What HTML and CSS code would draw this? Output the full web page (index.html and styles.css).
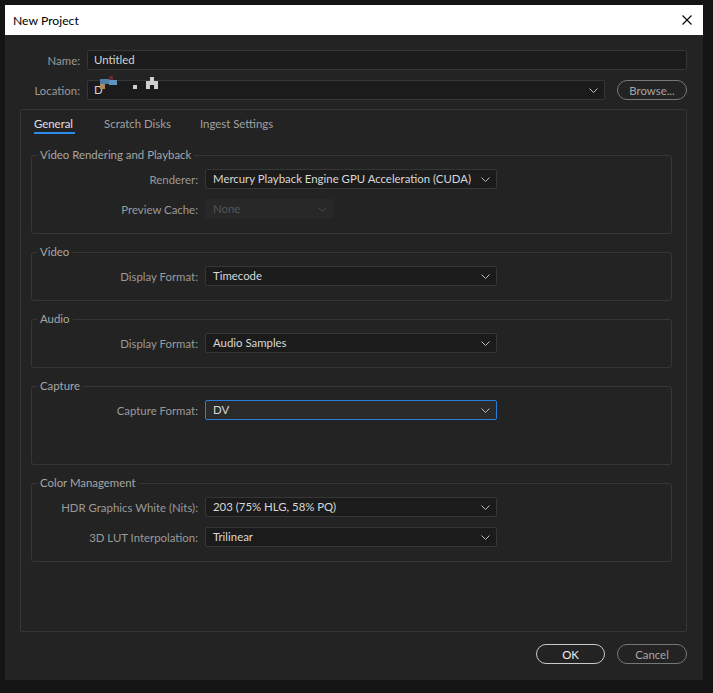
FILE: index.html
```html
<!DOCTYPE html>
<html lang="en">
<head>
    <meta charset="UTF-8">
    <title>New Project</title>
    <link rel="stylesheet" href="styles.css">
</head>
<body>
    <div class="window">
        <div class="titlebar">
            <span class="title">New Project</span>
            <svg class="close" width="10" height="10" viewBox="0 0 10 10">
                <path d="M0.5 0.5 L9.5 9.5 M9.5 0.5 L0.5 9.5" stroke="#000" stroke-width="1.1" fill="none"/>
            </svg>
        </div>

        <div class="content">
            <!-- project name and location -->
            <div class="top-form">
                <label class="top-label">Name:</label>
                <div class="text-field wide">Untitled</div>

                <label class="top-label">Location:</label>
                <div class="text-field location">
                    D
                    <span class="blur">
                        <i class="px p1"></i><i class="px p2"></i><i class="px p3"></i><i class="px p4"></i>
                        <i class="px dot"></i><i class="px house"></i>
                    </span>
                    <svg class="chev" width="9" height="5" viewBox="0 0 9 5"><path d="M0.5 0.5 L4.5 4.5 L8.5 0.5" stroke="#bbb" fill="none"/></svg>
                </div>
                <button class="pill browse">Browse...</button>
            </div>

            <div class="panel">
                <div class="tabs">
                    <span class="tab active">General</span>
                    <span class="tab">Scratch Disks</span>
                    <span class="tab">Ingest Settings</span>
                </div>

                <fieldset class="group first">
                    <legend>Video Rendering and Playback</legend>
                    <div class="row">
                        <span class="label">Renderer:</span>
                        <div class="select">Mercury Playback Engine GPU Acceleration (CUDA)
                            <svg class="chev" width="9" height="5" viewBox="0 0 9 5"><path d="M0.5 0.5 L4.5 4.5 L8.5 0.5" stroke="#bbb" fill="none"/></svg>
                        </div>
                    </div>
                    <div class="row">
                        <span class="label">Preview Cache:</span>
                        <div class="select small disabled">None
                            <svg class="chev" width="9" height="5" viewBox="0 0 9 5"><path d="M0.5 0.5 L4.5 4.5 L8.5 0.5" stroke="#4a4a4a" fill="none"/></svg>
                        </div>
                    </div>
                </fieldset>

                <fieldset class="group">
                    <legend>Video</legend>
                    <div class="row">
                        <span class="label">Display Format:</span>
                        <div class="select">Timecode
                            <svg class="chev" width="9" height="5" viewBox="0 0 9 5"><path d="M0.5 0.5 L4.5 4.5 L8.5 0.5" stroke="#bbb" fill="none"/></svg>
                        </div>
                    </div>
                </fieldset>

                <fieldset class="group">
                    <legend>Audio</legend>
                    <div class="row">
                        <span class="label">Display Format:</span>
                        <div class="select">Audio Samples
                            <svg class="chev" width="9" height="5" viewBox="0 0 9 5"><path d="M0.5 0.5 L4.5 4.5 L8.5 0.5" stroke="#bbb" fill="none"/></svg>
                        </div>
                    </div>
                </fieldset>

                <fieldset class="group tall">
                    <legend>Capture</legend>
                    <div class="row">
                        <span class="label">Capture Format:</span>
                        <div class="select focused">DV
                            <svg class="chev" width="9" height="5" viewBox="0 0 9 5"><path d="M0.5 0.5 L4.5 4.5 L8.5 0.5" stroke="#bbb" fill="none"/></svg>
                        </div>
                    </div>
                </fieldset>

                <fieldset class="group">
                    <legend>Color Management</legend>
                    <div class="row">
                        <span class="label">HDR Graphics White (Nits):</span>
                        <div class="select">203 (75% HLG, 58% PQ)
                            <svg class="chev" width="9" height="5" viewBox="0 0 9 5"><path d="M0.5 0.5 L4.5 4.5 L8.5 0.5" stroke="#bbb" fill="none"/></svg>
                        </div>
                    </div>
                    <div class="row">
                        <span class="label">3D LUT Interpolation:</span>
                        <div class="select">Trilinear
                            <svg class="chev" width="9" height="5" viewBox="0 0 9 5"><path d="M0.5 0.5 L4.5 4.5 L8.5 0.5" stroke="#bbb" fill="none"/></svg>
                        </div>
                    </div>
                </fieldset>
            </div>

            <div class="buttons">
                <button class="pill ok">OK</button>
                <button class="pill">Cancel</button>
            </div>
        </div>
    </div>
</body>
</html>
```

FILE: styles.css
```css
body {
    margin: 0;
    padding: 5px;
    background-color: #141414;
    font-family: Lato, "Noto Sans", sans-serif;
    font-size: 11.4px;
}
.window {
    width: 698px;
    height: 675px;
    display: flex;
    flex-direction: column;
}
.titlebar {
    height: 30px;
    background-color: #fff;
    display: flex;
    align-items: center;
    justify-content: space-between;
    padding: 0 11px 0 8px;
    color: #000;
    font-size: 12.2px;
}
.content {
    flex: 1;
    background-color: #232323;
    padding: 15px 16px 0 15px;
    display: flex;
    flex-direction: column;
}
.top-form {
    display: grid;
    grid-template-columns: 60px 1fr 70px;
    column-gap: 7px;
    row-gap: 10px;
    align-items: center;
}
.top-label {
    text-align: right;
    color: #9a9a9a;
}
.text-field {
    height: 20px;
    box-sizing: border-box;
    background-color: #1b1b1b;
    border: 1px solid #363636;
    border-radius: 2px;
    color: #d4d4d4;
    padding: 0 6px;
    line-height: 18px;
    position: relative;
    white-space: nowrap;
}
.text-field.wide {
    grid-column: 2 / 4;
}
.location {
    margin-right: 5px;
}
.blur {
    position: absolute;
    left: 12px;
    top: -5px;
    width: 60px;
    height: 14px;
}
.px {
    position: absolute;
    display: block;
}
.p1 { left: 0; top: 3px; width: 9px; height: 5px; background: #4f7fa6; }
.p2 { left: 9px; top: 0; width: 4px; height: 4px; background: #6a2a2a; }
.p3 { left: 0; top: 8px; width: 5px; height: 5px; background: #b08a5c; }
.p4 { left: 9px; top: 4px; width: 8px; height: 5px; background: #5f93c0; }
.dot { left: 33px; top: 9px; width: 4px; height: 4px; background: #cfcfcf; }
.house { left: 46px; top: 1px; width: 12px; height: 12px; background: #d0d0d0; clip-path: polygon(33% 0, 67% 0, 67% 33%, 100% 33%, 100% 100%, 67% 100%, 67% 67%, 33% 67%, 33% 100%, 0 100%, 0 33%, 33% 33%); }
.chev {
    position: absolute;
    right: 6px;
    top: 7px;
}
.pill {
    height: 20px;
    box-sizing: border-box;
    background: transparent;
    border: 1px solid #777;
    border-radius: 10px;
    color: #a6a6a6;
    font-family: inherit;
    font-size: 11.4px;
    padding: 0;
    width: 70px;
    line-height: 17px;
}
.pill.ok {
    border-color: #c9c9c9;
    color: #f0f0f0;
    width: 69px;
    margin-left: 1px;
}
.panel {
    margin-top: 9px;
    height: 523px;
    box-sizing: border-box;
    border: 1px solid #363636;
    border-radius: 2px;
    padding: 0 14px 0 10px;
}
.tabs {
    display: flex;
    gap: 29px;
    padding: 5px 0 0 3px;
    height: 28px;
    box-sizing: border-box;
}
.tab {
    color: #a0a0a0;
    height: 17px;
    border-bottom: 2px solid transparent;
    line-height: 17px;
}
.tab.active {
    color: #e0e0e0;
    border-bottom-color: #2d8ceb;
    padding-right: 2px;
}
.group {
    margin: 11px 0 0 0;
    padding: 7px 0 14px 0;
    border: 1px solid #363636;
    border-radius: 3px;
    display: flex;
    flex-direction: column;
    gap: 10px;
}
.group.first {
    margin-top: 10px;
}
.group legend {
    color: #a6a6a6;
    padding: 0 3px;
    margin-left: 5px;
    line-height: 14px;
}
.group.tall {
    padding-bottom: 44px;
}
.row {
    display: flex;
    align-items: center;
    gap: 7px;
}
.label {
    width: 166px;
    text-align: right;
    color: #9a9a9a;
    white-space: nowrap;
}
.select {
    width: 292px;
    height: 20px;
    box-sizing: border-box;
    background-color: #1b1b1b;
    border: 1px solid #363636;
    border-radius: 2px;
    color: #d8d8d8;
    padding: 0 7px;
    line-height: 18px;
    position: relative;
    white-space: nowrap;
}
.select.small {
    width: 129px;
}
.select.disabled {
    background-color: #282828;
    border-color: #282828;
    color: #555;
}
.select.focused {
    border-color: #2b7fd9;
    background-color: #2a2a2a;
}
.buttons {
    display: flex;
    justify-content: flex-end;
    gap: 12px;
    margin-top: 12px;
}
```
